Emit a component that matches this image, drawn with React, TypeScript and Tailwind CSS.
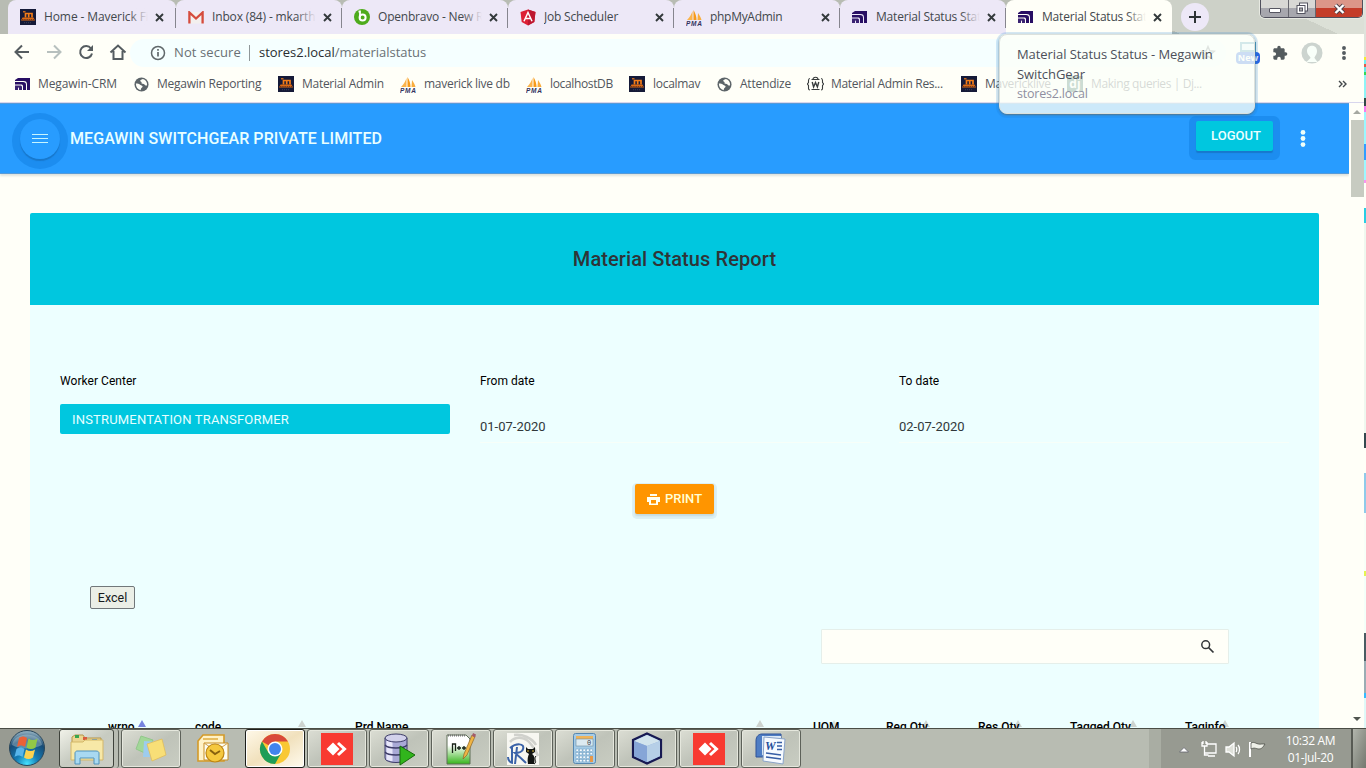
import type { ReactNode } from "react";

const ui = "font-['Open_Sans','Noto_Sans',sans-serif]";

function MavIcon() {
  return (
    <svg width="16" height="16" viewBox="0 0 16 16" className="shrink-0">
      <rect width="16" height="16" fill="#151a38" />
      <path d="M4 13.700h8" stroke="#3b4058" strokeWidth="1" strokeDasharray="1 1" />
      <path d="M5.500 8.500V4.500H12V8.500M8.700 4.500v4" fill="none" stroke="#f47d18" strokeWidth="1.700" />
      <path d="M3 2.800h2.500" stroke="#f47d18" strokeWidth="1.200" />
      <path d="M2.500 8.500h11L15 11.500H1z" fill="#dd6a12" />
      <path d="M2 10.500h12" stroke="#5b2c20" strokeWidth=".8" strokeDasharray="1.500 .7" />
    </svg>
  );
}
function MegaIcon() {
  return (
    <svg width="16" height="14" viewBox="0 0 16 14" className="shrink-0">
      <path d="M3 1h12v12h-3V7.500C12 5 11 4 8.500 4H0V3z" fill="#280e63" />
      <path d="M0 5h8c2 0 3 .8 3 3v5H8V9.500C8 8 7.500 7.500 6 7.500H0z" fill="#280e63" />
      <path d="M0 8.500h5c1.500 0 2 .6 2 2V13H4v-1.500c0-.6-.4-1-1-1v2.500H0z" fill="#3a2272" />
    </svg>
  );
}
function PmaIcon() {
  return (
    <svg width="17" height="17" viewBox="0 0 17 17" className="shrink-0">
      <path d="M1 11C4 8 5.500 5 6.500 2v9z" fill="#fbb44c" />
      <path d="M7.500 11V1c2 3 3 7 3 10z" fill="#f79a18" />
      <path d="M11.500 11l.5-7c1.500 2 3 5 3.500 7z" fill="#f9ad3d" />
      <text x="0" y="16.500" fontSize="6.500" fontWeight="700" fontStyle="italic" textLength="16" fontFamily="Liberation Sans" fill="#32325e">PMA</text>
    </svg>
  );
}
function GlobeIcon() {
  return (
    <svg width="15" height="15" viewBox="0 0 16 16" className="shrink-0">
      <circle cx="8" cy="8" r="7.500" fill="#5c6468" />
      <path d="M2 7c2 0 3 .3 4.500 1.200L9 9.500c.5 1-.5 1.700-1.200 2.200L7 14C4 13.500 2 11 2 7z" fill="#fffff8" />
      <path d="M9.500 2C7.500 2.500 6 3.500 6.800 4.500 8 5 8.500 5.800 8 6.800l2.500.7L13 9.500 14 8c0-3-1.800-5.200-4.500-6z" fill="#fffff8" />
    </svg>
  );
}
function GmailIcon() {
  return (
    <svg width="16" height="13" viewBox="0 0 16 13" className="shrink-0">
      <rect x="1" y="1" width="14" height="11.500" rx="1" fill="#f3efee" />
      <path d="M1.400 12.500V1.500L8 7.500l6.600-6v11" fill="none" stroke="#d54b3d" strokeWidth="2.300" />
    </svg>
  );
}
function BravoIcon() {
  return (
    <svg width="16" height="16" viewBox="0 0 16 16" className="shrink-0">
      <circle cx="8" cy="8" r="8" fill="#4dab1c" />
      <path d="M4.500 2.500h1.500v6" stroke="#fff" strokeWidth="1.800" fill="none" />
      <circle cx="8.600" cy="8.600" r="3" fill="none" stroke="#fff" strokeWidth="2" />
    </svg>
  );
}
function AngularIcon() {
  return (
    <svg width="16" height="17" viewBox="0 0 16 17" className="shrink-0">
      <path d="M8 .5l7.500 2.600-1.200 10L8 16.500l-6.300-3.400-1.200-10z" fill="#dd2035" />
      <path d="M8 .5l7.500 2.600-1.200 10L8 16.500z" fill="#bd1730" />
      <path d="M4 12.200L8 3.500l4 8.700M5.800 9.600h4.400" fill="none" stroke="#fff" strokeWidth="1.500" />
    </svg>
  );
}
function WIcon() {
  return (
    <svg width="17" height="16" viewBox="0 0 17 16" className="shrink-0" fill="none" stroke="#393d3d" strokeWidth="1.100">
      <path d="M3 2.500c-1.500 0-1.500.8-1.500 2v2L.4 8l1.100 1.500v3c0 1.200.5 1.500 1.500 1.500M14 2.500c1.500 0 1.500.8 1.500 2v2L16.600 8l-1.100 1.500v3c0 1.200-.5 1.500-1.500 1.500M4.500 3.500h8M4.500 13.500h8M6 3.500c0-3 5-3 5 0" />
      <path d="M5.200 6l1.400 5L8.500 6.500 10.400 11l1.400-5" strokeWidth="1.400" />
    </svg>
  );
}
function Cross() {
  return (
    <svg width="9" height="9" viewBox="0 0 9 9" className="shrink-0">
      <path d="M1 1l7 7M8 1L1 8" stroke="#33393b" strokeWidth="1.900" />
    </svg>
  );
}

function Tab({ icon, text, track, active, fade, first }: { icon: ReactNode; text: string; track: string; active?: boolean; fade?: boolean; first?: boolean }) {
  return (
    <div className={`relative flex h-[34px] shrink-0 items-center ${first ? "w-[168px] pl-3" : "w-[166px] pl-3"} ${active ? "rounded-t-lg bg-[#fffff8]" : "rounded-t-lg bg-[#ede8f7]"}`}>
      <div className="flex w-4 justify-center">{icon}</div>
      <div className={`relative ml-2 w-[104px] overflow-hidden whitespace-nowrap text-[12px] leading-[18px] text-[#42474c] ${track}`}>
        {text}
        {fade && <span className={`absolute inset-y-0 right-0 w-5 bg-linear-to-r from-transparent ${active ? "to-[#fffff8]" : "to-[#ede8f7]"}`} />}
      </div>
      <div className="ml-[7px]"><Cross /></div>
      {!active && <span className="absolute top-2 right-0 h-5 w-px bg-[#86858e]" />}
    </div>
  );
}

function Bookmark({ icon, text, box, track }: { icon: ReactNode; text: string; box: string; track: string }) {
  return (
    <div className={`flex h-full shrink-0 items-center ${box}`}>
      <div className="flex w-4 shrink-0 justify-center">{icon}</div>
      <span className={`ml-2 whitespace-nowrap text-[12px] leading-4 text-[#52565d] ${track}`}>{text}</span>
    </div>
  );
}

function Dots({ size, color }: { size: number; color: string }) {
  return (
    <svg width="6" height={size} viewBox={`0 0 6 ${size}`}>
      {[0, 1, 2].map((i) => <circle key={i} cx="3" cy={size / 2 + (i - 1) * (size * 0.36)} r={size * 0.14} fill={color} />)}
    </svg>
  );
}

function TaskButton({ children, kind = "normal" }: { children: ReactNode; kind?: "normal" | "plain" | "active" }) {
  const look = kind === "normal"
    ? "border border-[#5d6159] bg-linear-to-br from-[#dcded4] via-[#bfc3b9] to-[#c9cdc2] shadow-[inset_0_0_0_1px_#e5e7dd]"
    : kind === "active"
      ? "border border-[#1d1f1b] bg-linear-to-br from-[#fff9e9] via-[#f1e1bd] to-[#fffbee] shadow-[inset_0_0_0_1px_#fff]"
      : "border border-transparent";
  return <div className={`flex h-[39px] w-[60px] shrink-0 items-center justify-center rounded-[3px] ${look}`}>{children}</div>;
}

function AnyDesk() {
  return (
    <svg width="32" height="32" viewBox="0 0 32 32">
      <rect width="32" height="32" fill="#f83a31" />
      <path d="M5.500 16l6.500-6.500 6.500 6.500-6.500 6.500z" fill="#fff" />
      <path d="M16.500 10.500l5.500 5.500-5.500 5.500" fill="none" stroke="#f83a31" strokeWidth="2" />
      <path d="M17 10l6.500 6-6.500 6" fill="none" stroke="#fff" strokeWidth="3" />
    </svg>
  );
}

function Folder() {
  return (
    <svg width="34" height="32" viewBox="0 0 34 32">
      <path d="M2 4l3-2h8l2 3h16v21H2z" fill="#ecd590" stroke="#b4974c" />
      <rect x="5" y="2" width="4" height="3" fill="#36a550" /><rect x="13" y="4" width="4" height="3" fill="#d95b3e" /><rect x="22" y="6" width="5" height="3" fill="#4a91d3" />
      <path d="M1 9h12l2-2h18v20H1z" fill="#f7e8a7" stroke="#d3b768" />
      <path d="M5 31V20c0-1 1-2 2-2h19c2 0 3 1 3 2v11h-5v-6H10v6z" fill="#a9d9f1" stroke="#5093bd" />
    </svg>
  );
}
function Notes() {
  return (
    <svg width="32" height="28" viewBox="0 0 32 28">
      <path d="M6 1l12 4-6 14L1 14z" fill="#a2d798" stroke="#92c88b" />
      <path d="M9 6l14 1v15H8z" fill="#9dccee" />
      <path d="M12 9l15-5 4 16-14 6z" fill="#f8df77" stroke="#e0bd5c" strokeWidth=".8" />
    </svg>
  );
}
function Outlook() {
  return (
    <svg width="34" height="32" viewBox="0 0 34 32">
      <path d="M2 8l5-6h21v26H2z" fill="#fff2c7" stroke="#d49a29" strokeWidth="1.600" />
      <path d="M8 10h24v17H8z" fill="#fdfdf2" stroke="#c68e25" /><path d="M8 10l12 8 12-8" fill="none" stroke="#d3a14a" />
      <path d="M7 6h15" stroke="#e8be61" strokeWidth="2" />
      <circle cx="19" cy="20" r="9" fill="#f5c83e" stroke="#be8612" strokeWidth="1.200" />
      <path d="M14 17l5 4 5-3" fill="none" stroke="#86600e" strokeWidth="2" />
    </svg>
  );
}
function Chrome() {
  return (
    <svg width="32" height="32" viewBox="0 0 32 32">
      <circle cx="16" cy="16" r="15" fill="#f9c834" />
      <path d="M16 16L3 8.500A15 15 0 0 1 29 8.500H16z" fill="#d9493a" />
      <path d="M3 8.500A15 15 0 0 0 16 31l6.500-11.500L16 16 9.500 19.800z" fill="#1f9d58" />
      <circle cx="16" cy="16" r="7.500" fill="#fff" /><circle cx="16" cy="16" r="6" fill="#4284ee" />
    </svg>
  );
}
function Database() {
  return (
    <svg width="34" height="34" viewBox="0 0 34 34">
      <path d="M3 6v20c0 6 22 6 22 0V6z" fill="#a9a9d6" stroke="#3d3c68" />
      <path d="M6 9v19M9 10v19" stroke="#e8e7fb" strokeWidth="3" />
      <path d="M3 13c3 4 19 4 22 0M3 20c3 4 19 4 22 0" fill="none" stroke="#3d3c68" strokeWidth="1.300" />
      <ellipse cx="14" cy="6" rx="11" ry="4" fill="#d2d1eb" stroke="#3d3c68" />
      <path d="M18 14l15 9-15 10z" fill="#31b51c" stroke="#17690b" />
    </svg>
  );
}
function Notepad() {
  return (
    <svg width="32" height="34" viewBox="0 0 32 34">
      <defs><linearGradient id="np" x1="0" y1="0" x2="0" y2="1"><stop offset=".35" stopColor="#fff" /><stop offset="1" stopColor="#36b51b" /></linearGradient></defs>
      <path d="M2 3h19l4 4v25H2z" fill="url(#np)" stroke="#5e6f57" />
      <path d="M3 3.500h18" stroke="#777" strokeDasharray="1 1" strokeWidth="2" />
      <path d="M7.500 21v-9h3v7M12 16h4M14 14v4M17 16h4M19 14v4" stroke="#182117" fill="none" strokeWidth="1.300" />
      <path d="M18 27l1-5L27 3l3 1.500L22 23z" fill="#efb444" stroke="#8d6426" strokeWidth=".7" /><path d="M27 4l1-3 3 1.500-1 3z" fill="#a35b6a" />
    </svg>
  );
}
function IReport() {
  return (
    <svg width="32" height="32" viewBox="0 0 32 32">
      <rect width="32" height="32" fill="#f7f7f1" />
      <path d="M3 9C10 2 19 5 23 10S29 17 31 23M7 2c9-1 18 3 22 10" fill="none" stroke="#d0d1cc" strokeWidth="2.500" />
      <path d="M5 14v16M3 15c6-5 15-5 13 1-1 4-8 4-8 4s6 5 11 10M10 14L8 31M1 24c0 4 3 6 5 6" stroke="#3b63a8" fill="none" strokeWidth="2" />
      <path d="M19 14l2 2h5l2-2v5l-3 2c3 2 3 6 2 10h-6c-1-5 0-8 1-10l-3-2z" fill="#121512" /><path d="M27 31c4-2-1-5 2-8" fill="none" stroke="#121512" />
      <path d="M20 18h2M25 18h2" stroke="#d8b83d" />
    </svg>
  );
}
function Calc() {
  return (
    <svg width="24" height="31" viewBox="0 0 24 31">
      <rect x=".5" y=".5" width="22" height="30" rx="2" fill="#a5cbe6" stroke="#5687b0" />
      <rect x="3" y="3" width="17" height="3" fill="#eeb35a" /><rect x="3" y="6" width="17" height="7" fill="#dceaf1" stroke="#6c8ca2" strokeWidth=".6" />
      <text x="14" y="12" fontSize="7" fontFamily="Liberation Mono" fill="#334">0</text>
      <g fill="#f8fcff" stroke="#6a9cc0" strokeWidth=".5">{[16, 19.5, 23, 26.5].map((y) => [3, 6.5, 10, 13.5, 17].map((x) => <rect key={`${x}-${y}`} x={x} y={y} width="2.6" height="2.4" />))}</g>
      <rect x="17" y="23" width="3" height="6" fill="#e5984b" />
    </svg>
  );
}
function Cube() {
  return (
    <svg width="32" height="33" viewBox="0 0 32 33">
      <path d="M16 1.500l14 6.500v17l-14 6.500L2 25V8z" fill="#93b1de" stroke="#171952" strokeWidth="2.200" />
      <path d="M16 3l13 6-13 5L3 9z" fill="#d2e4ed" /><path d="M3 9l13 5v16L3 24z" fill="#86a5d7" /><path d="M29 9l-13 5v16l13-6z" fill="#b6cfe7" />
    </svg>
  );
}
function Word() {
  return (
    <svg width="32" height="32" viewBox="0 0 32 32">
      <path d="M1 8c0-5 3-7 6-7h19v23H1z" fill="#4e7dc4" stroke="#2e5397" /><path d="M7 3h19v19H7z" fill="#dce9f7" />
      <path d="M9 4l21 2-2 25-20-3z" fill="#f6faff" stroke="#89a3c8" />
      <text x="10" y="17" fontSize="12" fontWeight="700" fontStyle="italic" fontFamily="Liberation Serif" fill="#244c9a">W</text>
      <path d="M22 9.500h5M22 13h5M22 16.500h5M11 20l15 2M11 24l15 2" stroke="#365da5" strokeWidth="1.700" />
    </svg>
  );
}
function StartOrb() {
  return (
    <svg width="38" height="38" viewBox="0 0 38 38">
      <defs>
        <radialGradient id="orb" cx=".5" cy=".95" r=".9"><stop offset="0" stopColor="#46e2ff" /><stop offset=".35" stopColor="#147db5" /><stop offset=".75" stopColor="#174a75" /><stop offset="1" stopColor="#88a8ba" /></radialGradient>
      </defs>
      <circle cx="19" cy="19" r="17.500" fill="url(#orb)" stroke="#29465a" />
      <path d="M4 16C6 2 32 2 34 16c-8 4-22 5-30 0z" fill="#d5e4e6" opacity=".35" />
      <path d="M11 9c3-2 5-2 8 0l-2 9c-3-2-5-2-8 0z" fill="#ea6137" /><path d="M20.500 9.500c3 2 6 2 9 0l-2 9c-3 2-6 2-9 0z" fill="#92c846" />
      <path d="M8.500 20c3-2 5-2 8 0l-2 8c-3-2-5-2-8 0z" fill="#58b5ea" /><path d="M18 20.500c3 2 6 2 9 0l-2 8c-3 2-6 2-9 0z" fill="#fbd250" />
    </svg>
  );
}

const strip = [
  "h-[57px] bg-[#dfe3dc]", "h-[3px] bg-[#f6ee32]", "h-1 bg-[#72eef2]", "h-[3px] bg-[#e15c4a]", "h-[5px] bg-[#61e8eb]", "h-[3px] bg-[#35d957]", "h-[23px] bg-[#8ff4f7]", "h-2 bg-[#314948]", "h-[6px] bg-[#f57af1]", "h-8 bg-[#9bf7ff]", "h-4 bg-[#309dff]", "h-5 bg-[#9df7ff]", "h-[3px] bg-[#f894f1]", "h-[25px] bg-[#fffff8]", "h-[15px] bg-[#29cde4]", "h-[210px] bg-[#eff8ef]", "h-[15px] bg-[#33494f]", "h-[25px] bg-[#fffff8]", "h-[40px] bg-[#8fcbea]", "h-[58px] bg-[#f8fff8]", "h-[5px] bg-[#e4f451]", "h-[57px] bg-[#f4fff9]", "h-[28px] bg-[#495c63]", "h-[32px] bg-[#9aadb4]", "h-[5px] bg-[#35bbff]", "h-[30px] bg-[#dff9f8]",
];

const columns = [
  { name: "wrno", box: "ml-[78px] w-[87px]", arrow: "left-[30px] border-b-[#7583df]" },
  { name: "code", box: "w-[160px]", arrow: "left-[103px] border-b-[#cdd4d0]" },
  { name: "Prd Name", box: "w-[458px]", arrow: "left-[401px] border-b-[#cdd4d0]" },
  { name: "UOM", box: "w-[73px]", arrow: "left-[17px] border-b-[#d8e3df]" },
  { name: "Req Qty", box: "w-[92px]", arrow: "left-[36px] border-b-[#cdd4d0]" },
  { name: "Res Qty", box: "w-[92px]", arrow: "left-[36px] border-b-[#cdd4d0]" },
  { name: "Tagged Qty", box: "w-[115px]", arrow: "left-[59px] border-b-[#cdd4d0]" },
  { name: "Taginfo", box: "w-[60px]", arrow: "left-[36px] border-b-[#cdd4d0]" },
];

export default function App() {
  return (
    <div className={`relative flex h-[768px] w-[1366px] flex-col overflow-hidden bg-[#fffff8] ${ui}`}>
      <div className="flex h-[34px] shrink-0 bg-[linear-gradient(25deg,#b8bcb3_0%,#b8bcb3_82%,#cdd1c8_82%,#cdd1c8_93%,#dce0d7_93%)] pl-2">
        <Tab first icon={<MavIcon />} text="Home - Maverick Fi" track="tracking-[-0.1px]" fade />
        <Tab icon={<GmailIcon />} text="Inbox (84) - mkarthik" track="tracking-[-0.15px]" fade />
        <Tab icon={<BravoIcon />} text="Openbravo - New R" track="tracking-[-0.2px]" fade />
        <Tab icon={<AngularIcon />} text="Job Scheduler" track="tracking-[-0.2px]" />
        <Tab icon={<PmaIcon />} text="phpMyAdmin" track="tracking-[-0.3px]" />
        <Tab icon={<MegaIcon />} text="Material Status Status" track="tracking-[-0.2px]" fade />
        <Tab active icon={<MegaIcon />} text="Material Status Status" track="tracking-[-0.2px]" fade />
        <div className="mt-[3px] ml-[9px] flex size-7 items-center justify-center rounded-full bg-[#ede8f7]">
          <svg width="12" height="12" viewBox="0 0 12 12"><path d="M6 0v12M0 6h12" stroke="#2d3335" strokeWidth="2" /></svg>
        </div>
        <div className="ml-[51px] flex h-[18px] w-[103px] overflow-hidden rounded-b-[5px] border border-t-0 border-[#50505d] shadow-[0_0_0_1px_#e7e9e2]">
          <div className="flex w-7 items-center justify-center border-r border-[#66666e] bg-linear-to-b from-[#d8d8d5] from-50% to-[#a7a7ae] to-50%"><div className="mt-1 h-[5px] w-3 rounded-[1px] border border-[#555561] bg-white" /></div>
          <div className="flex w-[27px] items-center justify-center border-r border-[#66666e] bg-linear-to-b from-[#d8d8d5] from-50% to-[#a7a7ae] to-50%">
            <svg width="13" height="13" viewBox="0 0 13 13"><rect x="3.500" y="1" width="8" height="8" fill="#fff" stroke="#555561" /><rect x="1" y="3.500" width="8" height="8" fill="#fff" stroke="#555561" /><rect x="3.500" y="6" width="3" height="3" fill="#aaa" stroke="#555561" /></svg>
          </div>
          <div className="flex flex-1 items-center justify-center bg-linear-to-b from-[#dc9688] from-45% to-[#c43c29] to-50%">
            <svg width="13" height="12" viewBox="0 0 13 12"><path d="M2.500 2l8 8M10.500 2l-8 8" stroke="#4d4048" strokeWidth="4.200" /><path d="M2.500 2l8 8M10.500 2l-8 8" stroke="#fff" strokeWidth="2.400" /></svg>
          </div>
        </div>
      </div>

      <div className="flex h-[34px] shrink-0 items-center pt-1">
        <svg width="130" height="30" viewBox="0 0 130 30" fill="none" stroke="#555c60" strokeWidth="2">
          <path d="M29 14H16M22 7.500L15.500 14l6.500 6.500" /><path d="M47 14h13M54 7.500l6.500 6.500-6.500 6.500" stroke="#b7c0be" />
          <path d="M91 10.500A6 6 0 1 0 92 15.500" /><path d="M93 7v6h-6z" fill="#555c60" stroke="none" />
          <path d="M110.500 14.500l7.500-7 7.500 7M113.500 13v8h9v-8" />
        </svg>
        <div className="flex h-7 w-[1096px] items-center rounded-full bg-[#f5ffff] pl-5 text-[14px] text-[#697074]">
          <svg width="16" height="16" viewBox="0 0 16 16" fill="none" stroke="#60686b" strokeWidth="1.500"><circle cx="8" cy="8" r="6.500" /><path d="M8 7v4.500M8 4v1.700" strokeWidth="1.700" /></svg>
          <span className="ml-2 w-[67px] whitespace-nowrap text-[13px] tracking-[0.1px]">Not secure</span>
          <span className="ml-2 h-4 w-px bg-[#8f9799]" />
          <span className="ml-[9px] whitespace-nowrap text-[13px] tracking-[-0.03px]"><span className="text-[#292d30]">stores2.local</span>/materialstatus</span>
          <svg className="mr-[10px] ml-auto" width="16" height="16" viewBox="0 0 16 16"><path d="M8 1.500l1.800 4.300 4.700.4-3.600 3 1.100 4.600-4-2.500-4 2.500 1.100-4.600-3.600-3 4.700-.4z" fill="none" stroke="#7b8589" strokeWidth="1.400" /></svg>
        </div>
        <div className="ml-[10px] flex h-[22px] w-6 flex-col items-center">
          <span className="h-2.5 w-4 shrink-0 border-2 border-[#4999b5] bg-[#e4f5ff]" />
          <span className="h-3 w-6 shrink-0 rounded-sm bg-[#2865e2] text-center text-[9px] leading-[12px] font-bold text-white">New</span>
        </div>
        <svg className="ml-[12px]" width="16" height="16" viewBox="0 0 24 24"><path d="M20.500 11H19V7c0-1.100-.9-2-2-2h-4V3.500a2.500 2.500 0 0 0-5 0V5H4c-1.100 0-2 .9-2 2v3.800h1.500a2.700 2.700 0 0 1 0 5.400H2V20c0 1.100.9 2 2 2h3.800v-1.500a2.700 2.700 0 0 1 5.400 0V22H17c1.100 0 2-.9 2-2v-4h1.500a2.500 2.500 0 0 0 0-5z" fill="#545b5e" /></svg>
        <svg className="ml-[13px]" width="22" height="22" viewBox="0 0 22 22"><circle cx="11" cy="11" r="10.500" fill="#ccd4cf" /><path d="M6 9c0-7 10-7 10 0 0 4-2.500 5-2.500 7l3 4H5.500l4-4C9.500 14 6 13 6 9z" fill="#f8fff9" /></svg>
        <span className="ml-[18px]"><Dots size={14} color="#555c60" /></span>
      </div>

      <div className="flex h-[35px] shrink-0 items-center border-b border-[#d8d6ed] pb-[2px] pl-[15px]">
        <Bookmark icon={<MegaIcon />} text="Megawin-CRM" box="w-[118px]" track="ml-[7px] tracking-[-0.1px]" />
        <Bookmark icon={<GlobeIcon />} text="Megawin Reporting" box="w-[145px]" track="tracking-[-0.24px]" />
        <Bookmark icon={<MavIcon />} text="Material Admin" box="w-[122px]" track="tracking-[-0.28px]" />
        <Bookmark icon={<PmaIcon />} text="maverick live db" box="w-[126px]" track="tracking-[-0.28px]" />
        <Bookmark icon={<PmaIcon />} text="localhostDB" box="w-[103px]" track="tracking-[-0.35px]" />
        <Bookmark icon={<MavIcon />} text="localmav" box="w-[87px]" track="tracking-[-0.28px]" />
        <Bookmark icon={<GlobeIcon />} text="Attendize" box="w-[91px]" track="tracking-[-0.22px]" />
        <Bookmark icon={<WIcon />} text="Material Admin Res..." box="w-[154px]" track="tracking-[-0.3px]" />
        <Bookmark icon={<MavIcon />} text="Mavericklive" box="w-[106px]" track="tracking-[-0.28px]" />
        <Bookmark icon={<span className="flex size-4 items-center justify-center bg-[#27614f] text-[12px] leading-3 font-bold text-white">dj</span>} text="Making queries | Dj..." box="w-[271px]" track="tracking-[-0.4px]" />
        <svg width="9" height="8" viewBox="0 0 9 8"><path d="M1 1l3 3-3 3M5 1l3 3-3 3" fill="none" stroke="#44494c" strokeWidth="1.400" /></svg>
      </div>

      <div className="flex h-[625px] shrink-0">
        <main className="flex w-[1349px] flex-col overflow-hidden font-['Roboto',sans-serif]">
          <header className="z-10 flex h-[71px] shrink-0 items-center border-y border-[#579bd8] bg-[#289cff] pl-5 shadow-[0_2px_2px_#dfe4de]">
            <button className="flex size-10 items-center justify-center rounded-full bg-[#289cff] shadow-[0_2px_1px_#1878cc,0_2px_0_8px_#1c8df0]">
              <svg width="16" height="11" viewBox="0 0 16 11"><path d="M0 1.500h16M0 5.500h16M0 9.500h16" stroke="#c8f5ff" strokeWidth="1" /></svg>
            </button>
            <h1 className="ml-[10px] w-[1126px] whitespace-nowrap text-[16px] font-medium tracking-[0.07px] text-[#e9ffff]">MEGAWIN SWITCHGEAR PRIVATE LIMITED</h1>
            <button className="-mt-[6px] h-[30px] w-[77px] rounded-[2px] bg-[#00c7df] pl-[3px] text-[13px] font-medium text-[#edffff] shadow-[0_2px_1px_#1878cc,0_2px_0_7px_#1c8df0]">LOGOUT</button>
            <span className="ml-[27px]"><Dots size={17} color="#effff8" /></span>
          </header>
          <section className="mx-[30px] mt-[39px] flex h-[520px] flex-col rounded-t-[2px] bg-[#edffff]">
            <div className="flex h-[92px] shrink-0 items-center justify-center rounded-t-[2px] bg-[#00c7df]">
              <h2 className="text-[20px] font-medium tracking-[0.09px] text-[#2f3437]">Material Status Report</h2>
            </div>
            <div className="mt-[66px] grid h-[74px] shrink-0 grid-cols-[420px_419px_390px] pl-[30px] text-[12px] tracking-[0.04px] text-black">
              <div>
                <div className="h-[33px] leading-[20px]">Worker Center</div>
                <div className="h-[30px] w-[390px] rounded-[2px] bg-[#00c7df] pl-3 text-[13px] leading-[31px] tracking-[0.18px] text-[#e6ffff]">INSTRUMENTATION TRANSFORMER</div>
              </div>
              <div>
                <div className="h-[38px] leading-[20px]">From date</div>
                <div className="h-[34px] w-[390px] border-b border-[#f7fff9] text-[13px] leading-[35px] tracking-[0px] text-[#30383a]">01-07-2020</div>
              </div>
              <div>
                <div className="h-[38px] leading-[20px]">To date</div>
                <div className="h-[34px] w-[390px] border-b border-[#f7fff9] text-[13px] leading-[35px] tracking-[0px] text-[#30383a]">02-07-2020</div>
              </div>
            </div>
            <button className="mt-[39px] flex h-[30px] w-[79px] shrink-0 items-center justify-center gap-[5px] self-center rounded-[2px] bg-[#ff9500] text-[13px] font-medium text-[#ffffd5] shadow-[0_2px_2px_#c4dadd,0_2px_0_3px_#dcf1f5]">
              <svg width="13" height="11" viewBox="0 0 13 11"><path d="M3 0h7v2H3zM0 3h13v5h-2v3H2V8H0z" fill="#fffff0" /><path d="M4 6h5v3.500H4z" fill="#ff9500" /></svg>
              PRINT
            </button>
            <button className="mt-[72px] ml-[60px] h-[23px] w-[45px] shrink-0 rounded-[2px] border border-[#71777a] bg-[#ebefe7] text-[12.500px] leading-5 text-[#161a1c]">Excel</button>
            <div className="mt-5 mr-[90px] flex h-[35px] w-[408px] shrink-0 items-center justify-end self-end rounded-[1px] border border-[#e5efea] bg-[#fffff8] pr-[13px]">
              <svg width="15" height="15" viewBox="0 0 15 15"><circle cx="5.700" cy="5.700" r="3.900" fill="none" stroke="#333638" strokeWidth="1.500" /><path d="M8.500 8.500l5 5" stroke="#333638" strokeWidth="1.700" /></svg>
            </div>
            <div className="mt-[56px] flex h-[20px] shrink-0 text-[12px] leading-[14px] font-medium text-black">
              {columns.map((c) => (
                <div key={c.name} className={`relative shrink-0 whitespace-nowrap ${c.box}`}>
                  <i className={`absolute top-0 border-x-4 border-b-[7px] border-x-transparent ${c.arrow}`} />
                  <span className="relative">{c.name}</span>
                </div>
              ))}
            </div>
          </section>
        </main>
        <div className="flex w-[15px] flex-col items-center justify-between bg-[#fffff8] pl-px">
          <div className="flex flex-col items-center">
            <i className="mt-[7px] h-0 w-0 border-x-4 border-b-4 border-x-transparent border-b-[#a5a8a1]" />
            <span className="mt-[6px] h-[77px] w-[13px] bg-[#c7cbc1]" />
          </div>
          <i className="mb-[7px] h-0 w-0 border-x-4 border-t-4 border-x-transparent border-t-[#50554f]" />
        </div>
      </div>

      <footer className="z-20 flex h-10 shrink-0 border-t border-[#4a4d45] bg-[#b8bcb2]">
        <div className="flex w-[59px] shrink-0 justify-center bg-[#989b92] pr-[6px]"><StartOrb /></div>
        <div className="flex w-[1090px] shrink-0 gap-[2px]">
          <div className="flex w-[60px] rounded-r-[3px] border-r border-[#5d6159]"><div className="flex h-[39px] w-[55px] items-center justify-center rounded-[3px] border border-[#3e423b] bg-linear-to-br from-[#f1f2e9] via-[#c7cbc1] to-[#cbcec5]"><Folder /></div></div>
          <TaskButton><Notes /></TaskButton>
          <TaskButton kind="plain"><Outlook /></TaskButton>
          <TaskButton kind="active"><Chrome /></TaskButton>
          <TaskButton><AnyDesk /></TaskButton>
          <TaskButton><Database /></TaskButton>
          <TaskButton><Notepad /></TaskButton>
          <TaskButton><IReport /></TaskButton>
          <TaskButton><Calc /></TaskButton>
          <TaskButton><Cube /></TaskButton>
          <TaskButton><AnyDesk /></TaskButton>
          <TaskButton><Word /></TaskButton>
        </div>
        <div className="w-3 bg-[#a9ada3]" />
        <div className="flex w-[190px] items-center bg-[#979a91]">
          <svg className="ml-[17px]" width="90" height="22" viewBox="0 0 90 22" fill="none" stroke="#fff" strokeWidth="1.300">
            <path d="M1.500 14L6 9.500l4.500 4.500z" fill="#fff" stroke="#62636d" strokeWidth=".8" />
            <path d="M29 6h9v9H27M30 18h7" /><path d="M24 4v4h5V4M26.500 8v9h4M25 3v3M28 3v3" />
            <path d="M48 9h3l5-4v13l-5-4h-3z" fill="#dfe1da" /><path d="M58 9c1 1 1 4 0 5M60 7c2 2 2 7 0 9" />
            <path d="M72 4v15" strokeWidth="2" /><path d="M73 5c4-2 5 2 11 1l3 0c-2 3-3 5-6 5s-4-2-8 0z" fill="#eef0e8" stroke="#44463f" strokeWidth=".7" />
          </svg>
          <div className="ml-4 w-[53px] text-center text-[12px] leading-[17px] tracking-[-0.35px] whitespace-nowrap text-white">10:32 AM<br />01-Jul-20</div>
        </div>
        <div className="flex-1 border-l-2 border-[#585b54] bg-linear-to-br from-[#b2b5ac] to-[#74786f]" />
      </footer>

      <div className="absolute top-0 right-0 z-10 flex w-[2px] flex-col">
        {strip.map((s, i) => <span key={i} className={`w-full shrink-0 ${s}`} />)}
      </div>

      <div className="absolute top-[34px] left-[999px] z-20 h-20 w-64 rounded-lg border border-[#dce1dc] bg-[#fbfff8]/78 px-[17px] pt-[9px] text-[13px] leading-5 tracking-[-0.07px] text-[#4c4f59] shadow-[0_1px_2px_#52758b,0_1px_0_3px_#177cd22e]">
        <div className="whitespace-nowrap">Material Status Status - Megawin</div>
        <div>SwitchGear</div>
        <div className="text-[12.500px] tracking-[-0.2px] text-[#8f8fa1]">stores2.local</div>
      </div>
    </div>
  );
}
